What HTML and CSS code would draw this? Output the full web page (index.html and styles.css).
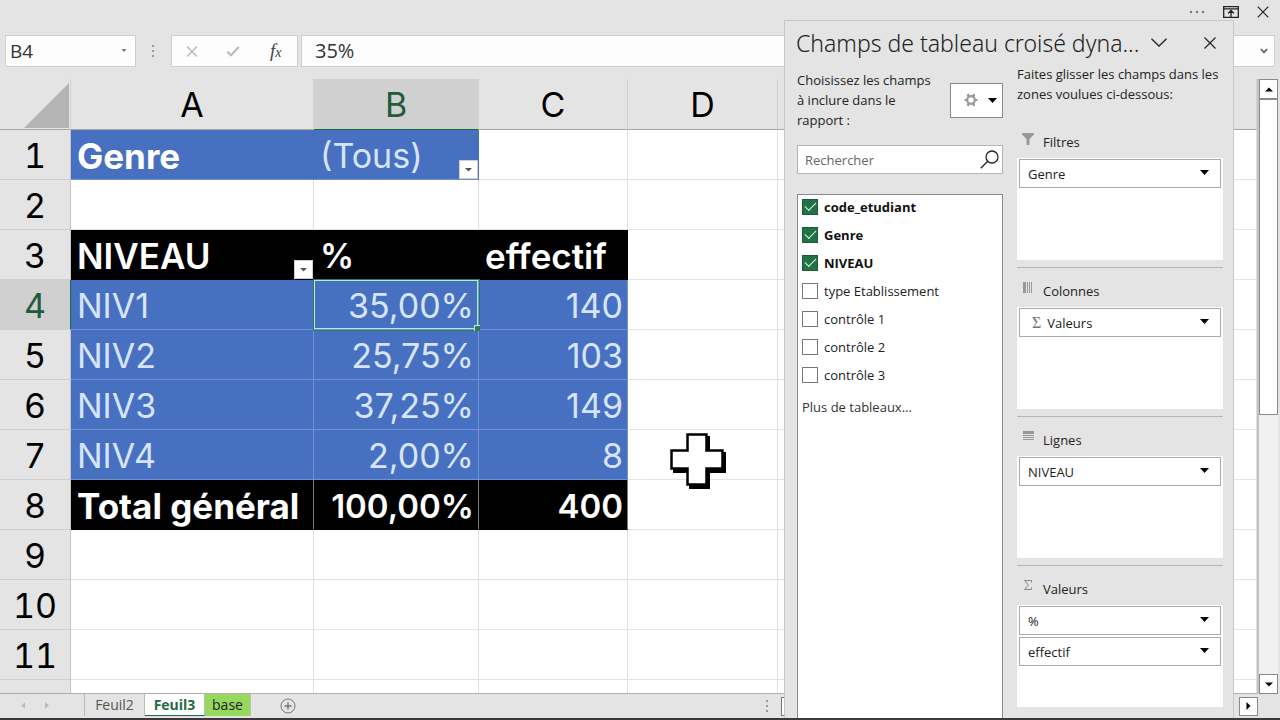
FILE: index.html
```html
<!DOCTYPE html>
<html lang="fr">
<head>
<meta charset="utf-8">
<title>Tableau croisé dynamique</title>
<link rel="stylesheet" href="styles.css">
</head>
<body>
<div class="window-controls">
  <button class="icon-btn" aria-label="Plus d'options"><svg width="16" height="4" viewBox="0 0 16 4" fill="#777"><circle cx="2" cy="2" r="1.2"/><circle cx="8" cy="2" r="1.2"/><circle cx="14" cy="2" r="1.2"/></svg></button>
  <button class="icon-btn" aria-label="Options d'affichage du ruban"><svg width="16" height="12" viewBox="0 0 16 12" fill="none" stroke="#222" stroke-width="1.3"><path d="M.7.7h14.6v10.6H.7zM.7 2.8h14.6M8 11V4.6M5 7.4l3-2.9 3 2.9"/></svg></button>
  <button class="icon-btn" aria-label="Fermer"><svg width="12" height="12" viewBox="0 0 12 12" fill="none" stroke="#222" stroke-width="1.2"><path d="M.7.7l10.6 10.6M11.3.7L.7 11.3"/></svg></button>
</div>

<div class="formula-bar">
  <div class="name-box">
    <input type="text" value="B4" aria-label="Zone Nom">
    <button class="icon-btn" aria-label="Liste des noms"><svg width="6" height="4" viewBox="0 0 6 4" fill="#777"><path d="M.5 0h5L3 3z"/></svg></button>
  </div>
  <svg class="grip" width="3" height="12" viewBox="0 0 3 12" fill="#999"><path d="M0 0h2v2H0zM0 5h2v2H0zM0 10h2v2H0z"/></svg>
  <div class="formula-actions">
    <button class="icon-btn" aria-label="Annuler"><svg width="12" height="11" viewBox="0 0 12 11" fill="none" stroke="#bcbcbc" stroke-width="1.5"><path d="M1 .5l10 10M11 .5l-10 10"/></svg></button>
    <button class="icon-btn" aria-label="Entrer"><svg width="14" height="11" viewBox="0 0 14 11" fill="none" stroke="#bcbcbc" stroke-width="2.2"><path d="M1.3 5.6l3.6 3.6L12.8 1"/></svg></button>
    <button class="icon-btn fx" aria-label="Insérer une fonction">f<span>x</span></button>
  </div>
  <div class="formula-input">
    <input type="text" value="35%" aria-label="Barre de formule">
    <button class="icon-btn" aria-label="Développer la barre de formule"><svg width="8" height="6" viewBox="0 0 8 6" fill="none" stroke="#666" stroke-width="1.8"><path d="M.8 1L4 4.4 7.2 1"/></svg></button>
  </div>
</div>

<main class="workspace">
  <div class="grid-view">
    <table class="grid">
      <colgroup><col class="w-head"><col class="w-a"><col class="w-b"><col class="w-c"><col class="w-d"><col></colgroup>
      <thead>
        <tr><th class="corner"><svg width="46" height="46" viewBox="0 0 46 46" fill="#b4b4b4"><path d="M46 0v45H1z"/></svg></th><th>A</th><th class="current">B</th><th>C</th><th>D</th><th></th></tr>
      </thead>
      <tbody>
        <tr><th>1</th><td class="blue strong flat">Genre</td><td class="blue flat has-filter">(Tous)<button class="filter" aria-label="Filtrer Genre"><svg width="7" height="4" viewBox="0 0 7 4" fill="#555"><path d="M0 0h7L3.500 3.500z"/></svg></button></td><td></td><td></td><td></td></tr>
        <tr><th>2</th><td></td><td></td><td></td><td></td><td></td></tr>
        <tr><th>3</th><td class="black title flat has-filter">NIVEAU<button class="filter" aria-label="Filtrer NIVEAU"><svg width="7" height="4" viewBox="0 0 7 4" fill="#555"><path d="M0 0h7L3.500 3.500z"/></svg></button></td><td class="black flat">%</td><td class="black title flat">effectif</td><td></td><td></td></tr>
        <tr><th class="current">4</th><td class="blue">NIV1</td><td class="blue num selected">35,00%</td><td class="blue num">140</td><td></td><td></td></tr>
        <tr><th>5</th><td class="blue">NIV2</td><td class="blue num">25,75%</td><td class="blue num">103</td><td></td><td></td></tr>
        <tr><th>6</th><td class="blue">NIV3</td><td class="blue num">37,25%</td><td class="blue num">149</td><td></td><td></td></tr>
        <tr><th>7</th><td class="blue">NIV4</td><td class="blue num">2,00%</td><td class="blue num">8</td><td></td><td></td></tr>
        <tr><th>8</th><td class="black total strong">Total général</td><td class="black num total">100,00%</td><td class="black num total">400</td><td></td><td></td></tr>
        <tr><th>9</th><td></td><td></td><td></td><td></td><td></td></tr>
        <tr><th>10</th><td></td><td></td><td></td><td></td><td></td></tr>
        <tr><th>11</th><td></td><td></td><td></td><td></td><td></td></tr>
        <tr><th></th><td></td><td></td><td></td><td></td><td></td></tr>
      </tbody>
    </table>
  </div>
  <div class="scrollbar">
    <button class="scroll-btn" aria-label="Défiler vers le haut"><svg width="8" height="5" viewBox="0 0 8 5"><path d="M0 4.500h8L4 .5z"/></svg></button>
    <div class="track"><div class="thumb"></div></div>
    <button class="scroll-btn" aria-label="Défiler vers le bas"><svg width="8" height="5" viewBox="0 0 8 5"><path d="M0 .5h8L4 4.500z"/></svg></button>
  </div>
</main>

<footer class="sheet-bar">
  <div class="sheet-nav">
    <button class="icon-btn" aria-label="Feuille précédente"><svg width="4" height="7" viewBox="0 0 5 8" fill="#bbb"><path d="M5 0v8L0 4z"/></svg></button>
    <button class="icon-btn" aria-label="Feuille suivante"><svg width="4" height="7" viewBox="0 0 5 8" fill="#bbb"><path d="M0 0v8l5-4z"/></svg></button>
  </div>
  <button class="tab">Feuil2</button>
  <button class="tab active">Feuil3</button>
  <button class="tab green">base</button>
  <button class="icon-btn add" aria-label="Nouvelle feuille"><svg width="16" height="16" viewBox="0 0 16 16" fill="none" stroke="#777"><circle cx="8" cy="8" r="7"/><path d="M8 4.500v7M4.500 8h7" stroke-width="1.4"/></svg></button>
  <div class="h-scroll">
    <svg width="3" height="12" viewBox="0 0 3 12" fill="#999"><path d="M0 0h2v2H0zM0 5h2v2H0zM0 10h2v2H0z"/></svg>
    <div class="h-track"><div class="h-thumb"></div></div>
    <button class="scroll-btn" aria-label="Défiler vers la droite"><svg width="5" height="8" viewBox="0 0 5 8"><path d="M.5 0v8l4-4z"/></svg></button>
  </div>
</footer>

<svg class="cursor" width="56" height="56" viewBox="0 0 56 56"><path d="M19 3h21v16h16v21H40v16H19V40H3V19h16z"/><path d="M17.500 1.500h19v16h16v18h-16v16h-19v-16h-16v-18h16z" fill="#fff" stroke="#000" stroke-width="2.500"/></svg>

<aside class="pane">
  <div class="pane-title">
    <h2>Champs de tableau croisé dyna...</h2>
    <button class="icon-btn" aria-label="Options du volet"><svg width="16" height="9" viewBox="0 0 16 9" fill="none" stroke="#222" stroke-width="1.3"><path d="M.5.7L8 8 15.500.7"/></svg></button>
    <button class="icon-btn close" aria-label="Fermer le volet"><svg width="12" height="12" viewBox="0 0 12 12" fill="none" stroke="#222" stroke-width="1.2"><path d="M.5.5l11 11M11.500.5l-11 11"/></svg></button>
  </div>
  <div class="pane-body">
    <section class="fields">
      <div class="choose">
        <p>Choisissez les champs à inclure dans le rapport :</p>
        <button class="gear" aria-label="Outils"><svg width="14" height="14" viewBox="0 0 14 14" fill="none" stroke="#999"><circle cx="7" cy="7" r="3.800" stroke-width="2.200"/><path d="M3.700 1l1 2.500M10.300 1l-1 2.500M3.700 13l1-2.500M10.300 13l-1-2.500M.5 7H3M11 7h2.500" stroke-width="2.200"/></svg><svg width="9" height="5" viewBox="0 0 9 5"><path d="M0 0h9L4.500 5z"/></svg></button>
      </div>
      <div class="search">
        <input type="text" placeholder="Rechercher" aria-label="Rechercher">
        <svg width="19" height="19" viewBox="0 0 19 19" fill="none" stroke="#222" stroke-width="1.300"><circle cx="12" cy="7" r="6"/><path d="M7.700 11.300L.8 18.200"/></svg>
      </div>
      <div class="field-list">
        <label><input type="checkbox" checked>code_etudiant</label>
        <label><input type="checkbox" checked>Genre</label>
        <label><input type="checkbox" checked>NIVEAU</label>
        <label><input type="checkbox">type Etablissement</label>
        <label><input type="checkbox">contrôle 1</label>
        <label><input type="checkbox">contrôle 2</label>
        <label><input type="checkbox">contrôle 3</label>
        <a href="#">Plus de tableaux...</a>
      </div>
    </section>
    <section class="zones">
      <p>Faites glisser les champs dans les zones voulues ci-dessous:</p>
      <div class="zone">
        <h3><svg width="12" height="12" viewBox="0 0 12 12" fill="#999"><path d="M0 0h12v1.500L7.500 6v6h-3V6L0 1.500z"/></svg>Filtres</h3>
        <div class="drop"><button class="item">Genre<svg width="9" height="5" viewBox="0 0 9 5"><path d="M0 0h9L4.500 5z"/></svg></button></div>
      </div>
      <div class="zone">
        <h3><svg width="12" height="12" viewBox="0 0 12 12" fill="#999"><path d="M1 0h3v11H1zM5 0h1v11H5zM7 0h1v11H7zM9 0h1v11H9z"/></svg>Colonnes</h3>
        <div class="drop"><button class="item"><span><i class="sigma">Σ</i>Valeurs</span><svg width="9" height="5" viewBox="0 0 9 5"><path d="M0 0h9L4.500 5z"/></svg></button></div>
      </div>
      <div class="zone">
        <h3><svg width="12" height="12" viewBox="0 0 12 12" fill="#999"><path d="M1 0h11v3H1zM1 4h11v1H1zM1 6h11v1H1zM1 8h11v1H1z"/></svg>Lignes</h3>
        <div class="drop"><button class="item">NIVEAU<svg width="9" height="5" viewBox="0 0 9 5"><path d="M0 0h9L4.500 5z"/></svg></button></div>
      </div>
      <div class="zone">
        <h3><svg width="12" height="12" viewBox="0 0 12 12" fill="none" stroke="#888"><path d="M9.500 2.500V.5h-7L6.500 5l-4 4.500h7v-2"/></svg>Valeurs</h3>
        <div class="drop"><button class="item">%<svg width="9" height="5" viewBox="0 0 9 5"><path d="M0 0h9L4.500 5z"/></svg></button><button class="item">effectif<svg width="9" height="5" viewBox="0 0 9 5"><path d="M0 0h9L4.500 5z"/></svg></button></div>
      </div>
    </section>
  </div>
</aside>
</body>
</html>
```

FILE: styles.css
```css
* { box-sizing: border-box; }

body {
  position: relative;
  display: flex;
  flex-direction: column;
  height: 100vh;
  margin: 0;
  overflow: hidden;
  border-bottom: 2px solid #3a383c;
  background: #e4e4e4;
  color: #222;
  font: 13px/20px "Open Sans", "Noto Sans", sans-serif;
}

button, input { font: inherit; color: inherit; }
button { padding: 0; }
h2, h3, p { margin: 0; font-weight: 400; }
svg { flex: none; }

.icon-btn {
  display: flex;
  align-items: center;
  justify-content: center;
  border: 0;
  background: none;
}

/* Window controls */
.window-controls {
  display: flex;
  justify-content: flex-end;
  gap: 18px;
  height: 35px;
  padding: 0 11px 12px 0;
}

/* Formula bar */
.formula-bar {
  display: flex;
  align-items: center;
  height: 44px;
  padding: 0 5px 12px 5px;
}
.name-box, .formula-actions, .formula-input {
  display: flex;
  align-items: center;
  height: 32px;
  border: 1px solid #cfcfcf;
  background: #fdfdfd;
}
.name-box { width: 131px; padding-right: 8px; }
.name-box input, .formula-input input {
  flex: 1;
  min-width: 0;
  border: 0;
  background: none;
  color: #333;
  font: 20px/28px "Open Sans", sans-serif;
  outline: 0;
}
.name-box input { padding: 0 0 0 4px; font-size: 19px; }
.formula-input input { padding: 0 0 0 13px; }
.grip { margin: 0 16px; }
.formula-actions { width: 127px; margin-right: 3px; justify-content: space-around; }
.fx { width: 14px; color: #444; font: italic 19px/24px "Liberation Serif", serif; }
.fx span { font-size: 14px; padding-top: 3px; }
.formula-input { flex: 1; padding-right: 6px; }

/* Grid */
.workspace { display: flex; flex: 1; min-height: 0; }
.grid-view { flex: 1; min-width: 0; overflow: hidden; border-bottom: 1px solid #b0b0b0; }
.grid {
  width: 100%;
  table-layout: fixed;
  border-collapse: separate;
  border-spacing: 0;
  background: #fff;
  font: 34px/40px Inter, sans-serif;
}
.w-head { width: 71px; }
.w-a { width: 243px; }
.w-b { width: 165px; }
.w-c { width: 149px; }
.w-d { width: 150px; }
.grid th {
  height: 50px;
  padding: 2px 0 0;
  border-right: 1px solid #c4c4c4;
  border-bottom: 1px solid #cfcfcf;
  background: #e4e4e4;
  color: #000;
  font-weight: 400;
  font-variant-numeric: tabular-nums;
}
.grid thead th { height: 51px; border-bottom-color: #a8a8a8; border-right-color: #d2d2d2; }
.grid .corner { padding: 0 1px 0 0; text-align: right; vertical-align: bottom; }
.corner svg { display: block; margin-left: auto; }
.grid th.current { background: #d0d0d0; color: #1e5c3a; }
.grid thead th.current { border-bottom-color: #1e6b42; }
.grid tbody th.current { border-right-color: #1e6b42; }
.grid td {
  height: 50px;
  padding: 2px 6px 0;
  border-right: 1px solid #e0e0e0;
  border-bottom: 1px solid #e4e4e4;
  white-space: nowrap;
}
.grid .blue { background: #4870c0; color: #d6e4ff; border-color: #6f92d4; }
.grid .black { background: #000; color: #fff; border-color: #000; font-weight: 600; }
.grid .flat { border-right-color: transparent; }
.grid .total { border-right-color: #777; font-size: 33px; }
.grid .title { font-size: 35px; }
.grid .strong { color: #fff; font-size: 35px; font-weight: 700; }
.grid .num { padding-right: 4px; text-align: right; }
.has-filter { position: relative; }
.filter {
  position: absolute;
  right: 0;
  bottom: 0;
  display: flex;
  align-items: center;
  justify-content: center;
  width: 19px;
  height: 19px;
  border: 1px solid #c8d0e0;
  background: #fff;
}
.selected { position: relative; outline: 1px solid #2f7a58; box-shadow: inset 0 0 0 1px #b6ead2; }
.selected::after {
  content: "";
  position: absolute;
  right: -2px;
  bottom: -2px;
  width: 5px;
  height: 5px;
  border: 1px solid #b6ead2;
  border-width: 1px 0 0 1px;
  background: #2f7a58;
}

/* Scrollbars */
.scrollbar { display: flex; flex-direction: column; width: 23px; padding-right: 2px; border-left: 2px solid #c4c4c4; }
.scroll-btn {
  display: flex;
  align-items: center;
  justify-content: center;
  width: 19px;
  height: 19px;
  border: 1px solid #8a8a8a;
  background: #fff;
}
.scrollbar .scroll-btn { width: 100%; height: 20px; }
.track { flex: 1; background: #f0f0f0; }
.thumb { height: 55%; border: 1px solid #8a8a8a; background: #fff; }

/* Sheet tabs */
.sheet-bar { display: flex; align-items: flex-start; height: 24px; }
.sheet-nav { display: flex; justify-content: space-between; width: 85px; height: 22px; padding: 0 35px 0 21px; border-right: 1px solid #bbb; }
.tab { height: 22px; border: 0; border-right: 1px solid #bbb; background: none; color: #555; font-size: 14px; line-height: 18px; }
.tab:nth-of-type(1) { width: 60px; }
.tab.active { width: 60px; border-bottom: 1px solid #1e6b42; background: #fff; color: #1e6b42; font-weight: 700; }
.tab.green { width: 46px; background: #97d95c; color: #222; }
.add { width: 16px; height: 24px; margin-left: 29px; }
.h-scroll { display: flex; flex: 1; align-items: center; justify-content: flex-end; height: 24px; padding-right: 22px; }
.h-track { width: 458px; height: 19px; margin: 0 0 0 12px; }
.h-thumb { width: 80%; height: 19px; border: 1px solid #777; background: #fff; }

/* Mouse pointer over the grid */
.cursor { position: absolute; left: 670px; top: 433px; }

/* Field pane, floating above the grid */
.pane {
  position: absolute;
  top: 20px;
  right: 46px;
  bottom: 0;
  display: flex;
  flex-direction: column;
  width: 450px;
  padding: 0 10px 0 12px;
  border: 1px solid #c8c8c8;
  border-bottom: 0;
  background: #e4e4e4;
}
.pane-title { display: flex; align-items: center; height: 43px; padding: 0 7px 0 0; }
.pane-title h2 { margin-left: -1px; color: #222; font: 300 23px/32px "Noto Sans", "Open Sans", sans-serif; white-space: nowrap; }
.pane-title .icon-btn { margin-left: 12px; }
.pane-title .close { margin-left: auto; }
.pane-body { display: grid; grid-template-columns: 1fr 1fr; gap: 14px; flex: 1; min-height: 0; }

.fields { display: flex; flex-direction: column; padding-top: 6px; }
.choose { display: flex; align-items: center; justify-content: space-between; height: 60px; margin-bottom: 15px; }
.choose p { width: 140px; }
.gear {
  display: flex;
  align-items: center;
  justify-content: flex-end;
  gap: 10px;
  width: 53px;
  height: 35px;
  padding-right: 5px;
  border: 1px solid #8a8a8a;
  background: #fff;
}
.search {
  display: flex;
  align-items: center;
  height: 29px;
  margin-bottom: 20px;
  padding-right: 3px;
  border: 1px solid #b4b4b4;
  background: #fff;
}
.search input { flex: 1; min-width: 0; padding: 0 0 0 7px; border: 0; background: none; outline: 0; }
.search input::placeholder { color: #666; opacity: 1; }
.field-list { flex: 1; border: 1px solid #8a8a8a; border-bottom: 0; background: #fff; }
.field-list label { display: flex; align-items: center; gap: 6px; height: 28px; padding: 0 0 5px 4px; }
.field-list label:has(:checked) { color: #111; font-weight: 700; }
.field-list input {
  width: 16px;
  height: 16px;
  margin: 0;
  border: 1px solid #777;
  background: #fff;
  appearance: none;
}
.field-list input:checked { display: grid; place-items: center; border-color: #1c5a38; background: #217346; }
.field-list input:checked::before {
  content: "";
  width: 10px;
  height: 5px;
  margin-bottom: 3px;
  border: solid #d8f5e4;
  border-width: 0 0 1px 1px;
  transform: rotate(-45deg);
}
.field-list a { display: block; padding: 6px 0 0 4px; color: #333; text-decoration: none; }

.zones { display: flex; flex-direction: column; padding-bottom: 3px; }
.zones p { height: 55px; }
.zone { display: flex; flex-direction: column; flex: 1; padding-bottom: 7px; border-bottom: 1px solid #b4b4b4; }
.zone:last-child { border-bottom-color: transparent; }
.zone h3 { display: flex; align-items: flex-start; gap: 9px; height: 39px; padding: 13px 0 0 5px; font-size: 13px; }
.zone h3 svg { margin-top: 1px; }
.drop { display: flex; flex-direction: column; gap: 2px; flex: 1; padding: 1px 2px; background: #fff; }
.item {
  display: flex;
  align-items: center;
  justify-content: space-between;
  height: 29px;
  padding: 0 11px 0 8px;
  border: 1px solid #aaa;
  background: #fff;
}
.item svg { margin-bottom: 2px; }
.sigma { margin: 0 6px 0 4px; color: #777; font: 16px/20px "Liberation Serif", serif; }
```
